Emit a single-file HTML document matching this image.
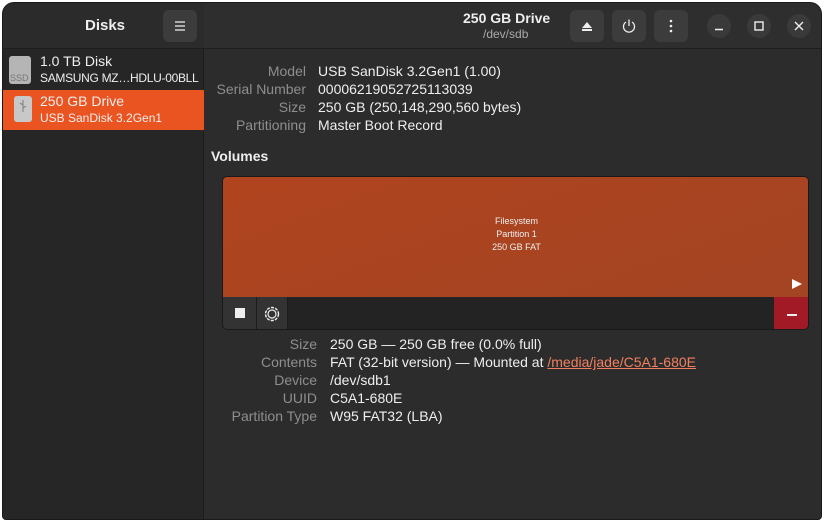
<!DOCTYPE html>
<html><head><style>
*{margin:0;padding:0;box-sizing:border-box}
body{width:825px;height:523px;background:#fff;font-family:"Liberation Sans",sans-serif;overflow:hidden;position:relative}
.win{position:absolute;left:2px;top:2px;width:820px;height:518px;border-radius:12px 12px 4px 4px;background:#2c2c2c;overflow:hidden;border:1px solid #1a1a1a}
.hdr{position:absolute;left:0;top:0;width:820px;height:46px;background:#2e2e2e;border-bottom:1px solid #1e1e1e}
.side{position:absolute;left:0;top:0;width:201px;height:518px;background:#262626;border-right:1px solid #1c1c1c}
.sidehdr{position:absolute;left:0;top:0;width:201px;height:46px;background:#2b2b2b;border-bottom:1px solid #1e1e1e}
.btn{position:absolute;width:34px;height:32px;border-radius:6px;background:#3c3c3c;color:#eee;display:flex;align-items:center;justify-content:center}
.circ{position:absolute;width:24px;height:24px;border-radius:50%;background:#3a3a3a;color:#eee;display:flex;align-items:center;justify-content:center}
.t{position:absolute;font-size:14px;color:#eee;white-space:nowrap}
.lbl{position:absolute;font-size:14px;color:#8e8e8e;text-align:right;white-space:nowrap}
</style></head><body>
<div class="win">
<div class="hdr"></div>
<div class="side"></div>
<div class="sidehdr"></div>
<div class="t" style="left:82px;top:14px;font-weight:bold;font-size:15px">Disks</div>
<div class="btn" style="left:160px;top:7px"><svg width="14" height="12"><path d="M2 2h10M2 6h10M2 10h10" stroke="#eee" stroke-width="1.3"/></svg></div>
<div class="t" style="left:460px;top:7px;font-weight:bold">250 GB Drive</div>
<div class="t" style="left:480px;top:24px;font-size:12px;color:#aaa">/dev/sdb</div>
<div class="btn" style="left:567px;top:7px"><svg width="14" height="14"><path d="M7 3L12 9H2Z" fill="#eee"/><rect x="2" y="10" width="10" height="2" fill="#eee"/></svg></div>
<div class="btn" style="left:609px;top:7px"><svg width="16" height="16"><path d="M5 4A5.5 5.5 0 1 0 11 4" stroke="#eee" stroke-width="1.3" fill="none"/><path d="M8 1.5V8" stroke="#eee" stroke-width="1.3"/></svg></div>
<div class="btn" style="left:651px;top:7px"><svg width="4" height="14"><circle cx="2" cy="2" r="1.3" fill="#eee"/><circle cx="2" cy="7" r="1.3" fill="#eee"/><circle cx="2" cy="12" r="1.3" fill="#eee"/></svg></div>
<div class="circ" style="left:704px;top:11px"><svg width="10" height="10"><path d="M1 8.5h8" stroke="#eee" stroke-width="1.4"/></svg></div>
<div class="circ" style="left:744px;top:11px"><svg width="10" height="10"><rect x="1" y="1" width="8" height="8" stroke="#eee" stroke-width="1.4" fill="none"/></svg></div>
<div class="circ" style="left:784px;top:11px"><svg width="10" height="10"><path d="M1 1L9 9M9 1L1 9" stroke="#eee" stroke-width="1.4"/></svg></div>

<div style="position:absolute;left:6px;top:53px;width:22px;height:28px;border-radius:3px;background:#b5b5b5"><span style="position:absolute;left:1px;bottom:1px;font-size:9px;color:#777">SSD</span></div>
<div class="t" style="left:37px;top:50px">1.0 TB Disk</div>
<div class="t" style="left:37px;top:68px;font-size:12px;letter-spacing:-0.3px">SAMSUNG MZ…HDLU-00BLL</div>
<div style="position:absolute;left:0;top:87px;width:201px;height:40px;background:#e95420"></div>
<div style="position:absolute;left:11px;top:93px;width:18px;height:26px;border-radius:3px;background:#c8c8c8"><svg width="18" height="20"><path d="M9 4V16M9 9L6 7M9 12L12 10" stroke="#888" stroke-width="1.2" fill="none"/></svg></div>
<div class="t" style="left:37px;top:90px">250 GB Drive</div>
<div class="t" style="left:37px;top:108px;font-size:12px">USB SanDisk 3.2Gen1</div>

<div class="lbl" style="right:515px;top:60px">Model</div>
<div class="lbl" style="right:515px;top:78px">Serial Number</div>
<div class="lbl" style="right:515px;top:96px">Size</div>
<div class="lbl" style="right:515px;top:114px">Partitioning</div>
<div class="t" style="left:315px;top:60px">USB SanDisk 3.2Gen1 (1.00)</div>
<div class="t" style="left:315px;top:78px">00006219052725113039</div>
<div class="t" style="left:315px;top:96px">250 GB (250,148,290,560 bytes)</div>
<div class="t" style="left:315px;top:114px">Master Boot Record</div>
<div class="t" style="left:208px;top:145px;font-weight:bold">Volumes</div>

<div style="position:absolute;left:219px;top:173px;width:587px;height:154px;border-radius:5px;background:#232323;overflow:hidden;border:1px solid #1a1a1a">
<div style="position:absolute;left:0;top:0;width:587px;height:120px;background:linear-gradient(160deg,#b0441f,#a34422)"></div>
<div style="position:absolute;left:0;top:38px;width:587px;text-align:center;font-size:9px;color:#eee;line-height:13px">Filesystem<br>Partition 1<br>250 GB FAT</div>
<svg style="position:absolute;left:568px;top:101px" width="12" height="12"><path d="M1 1L11 6L1 11Z" fill="#fff"/></svg>
<div style="position:absolute;left:0;top:120px;width:34px;height:34px;background:#333;border-right:1px solid #1c1c1c"><div style="position:absolute;left:12px;top:11px;width:10px;height:10px;background:#eee"></div></div>
<div style="position:absolute;left:34px;top:120px;width:31px;height:34px;background:#333;border-right:1px solid #1c1c1c"><svg style="position:absolute;left:6px;top:8px" width="18" height="18"><circle cx="9" cy="9" r="6.5" stroke="#eee" stroke-width="1.4" fill="none" stroke-dasharray="3 1.2"/><circle cx="9" cy="9" r="4" stroke="#eee" stroke-width="1.2" fill="none"/></svg></div>
<div style="position:absolute;left:551px;top:120px;width:36px;height:34px;background:#a11a26"><div style="position:absolute;left:13px;top:17px;width:10px;height:1.5px;background:#eee"></div></div>
</div>

<div class="lbl" style="right:504px;top:333px">Size</div>
<div class="lbl" style="right:504px;top:351px">Contents</div>
<div class="lbl" style="right:504px;top:369px">Device</div>
<div class="lbl" style="right:504px;top:387px">UUID</div>
<div class="lbl" style="right:504px;top:405px">Partition Type</div>
<div class="t" style="left:327px;top:333px">250 GB — 250 GB free (0.0% full)</div>
<div class="t" style="left:327px;top:351px">FAT (32-bit version) — Mounted at <span style="color:#f08060;text-decoration:underline">/media/jade/C5A1-680E</span></div>
<div class="t" style="left:327px;top:369px">/dev/sdb1</div>
<div class="t" style="left:327px;top:387px">C5A1-680E</div>
<div class="t" style="left:327px;top:405px">W95 FAT32 (LBA)</div>
</div>
</body></html>
